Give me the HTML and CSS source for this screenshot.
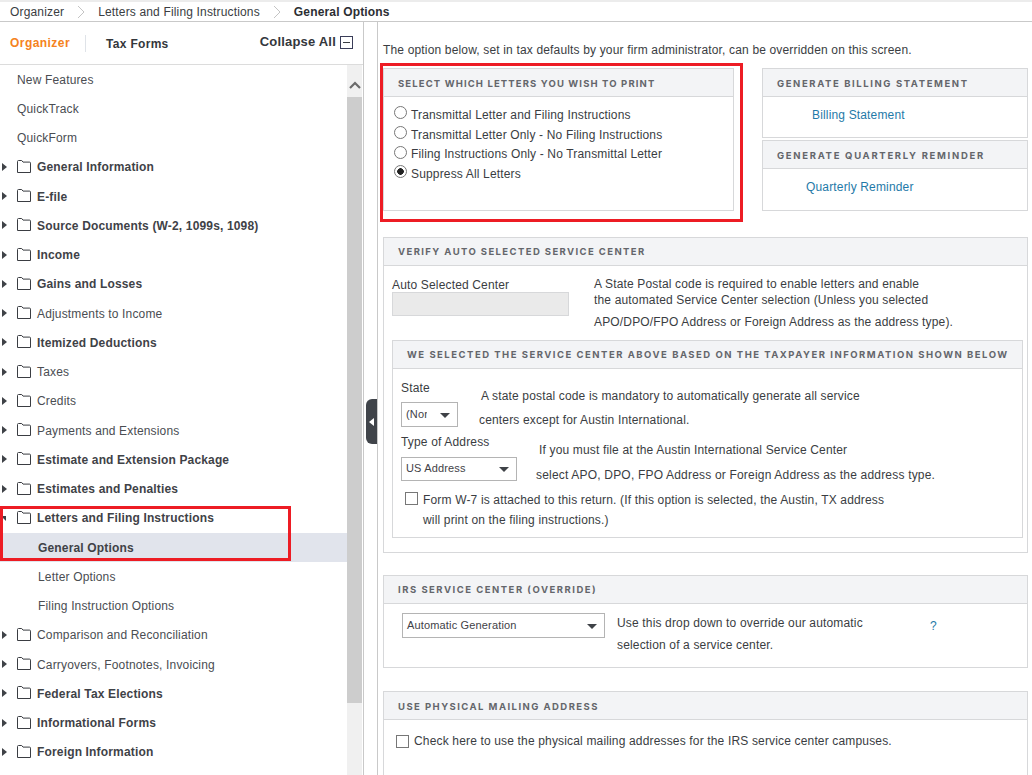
FILE: index.html
```html
<!DOCTYPE html>
<html lang="en">
<head>
<meta charset="utf-8">
<title>General Options</title>
<link rel="stylesheet" href="styles.css">
</head>
<body>
<svg class="defs" width="0" height="0" aria-hidden="true">
  <symbol id="folder" viewBox="0 0 14 13"><path d="M.5 12.5V1.5a1 1 0 0 1 1-1h3.2l1.3 1.6h6.5a1 1 0 0 1 1 1v9.4z" fill="none" stroke="#3a3d42"/></symbol>
</svg>
<nav class="crumbs">
  <span>Organizer</span>
  <svg class="crumb-sep" width="8" height="14" viewBox="0 0 8 14"><path d="M1 1l6 6-6 6" fill="none" stroke="#c4c4c4"/></svg>
  <span>Letters and Filing Instructions</span>
  <svg class="crumb-sep" width="8" height="14" viewBox="0 0 8 14"><path d="M1 1l6 6-6 6" fill="none" stroke="#c4c4c4"/></svg>
  <strong>General Options</strong>
</nav>
<div class="app">
  <aside class="sidebar">
    <div class="tabs">
      <span class="tab tab-active">Organizer</span>
      <span class="tab tab-forms">Tax Forms</span>
      <span class="collapse">Collapse All <i class="minus"></i></span>
    </div>
    <div class="tree-wrap">
      <ul class="tree">
        <li class="row plain">New Features</li>
        <li class="row plain">QuickTrack</li>
        <li class="row plain">QuickForm</li>
        <li class="row b"><i class="caret"></i><svg class="folder"><use href="#folder"/></svg>General Information</li>
        <li class="row b"><i class="caret"></i><svg class="folder"><use href="#folder"/></svg>E-file</li>
        <li class="row b"><i class="caret"></i><svg class="folder"><use href="#folder"/></svg>Source Documents (W-2, 1099s, 1098)</li>
        <li class="row b"><i class="caret"></i><svg class="folder"><use href="#folder"/></svg>Income</li>
        <li class="row b"><i class="caret"></i><svg class="folder"><use href="#folder"/></svg>Gains and Losses</li>
        <li class="row"><i class="caret"></i><svg class="folder"><use href="#folder"/></svg>Adjustments to Income</li>
        <li class="row b"><i class="caret"></i><svg class="folder"><use href="#folder"/></svg>Itemized Deductions</li>
        <li class="row"><i class="caret"></i><svg class="folder"><use href="#folder"/></svg>Taxes</li>
        <li class="row"><i class="caret"></i><svg class="folder"><use href="#folder"/></svg>Credits</li>
        <li class="row"><i class="caret"></i><svg class="folder"><use href="#folder"/></svg>Payments and Extensions</li>
        <li class="row b"><i class="caret"></i><svg class="folder"><use href="#folder"/></svg>Estimate and Extension Package</li>
        <li class="row b"><i class="caret"></i><svg class="folder"><use href="#folder"/></svg>Estimates and Penalties</li>
        <li class="row b"><i class="caret caret-open"></i><svg class="folder"><use href="#folder"/></svg>Letters and Filing Instructions</li>
        <li class="row sub selected">General Options</li>
        <li class="row sub">Letter Options</li>
        <li class="row sub">Filing Instruction Options</li>
        <li class="row"><i class="caret"></i><svg class="folder"><use href="#folder"/></svg>Comparison and Reconciliation</li>
        <li class="row"><i class="caret"></i><svg class="folder"><use href="#folder"/></svg>Carryovers, Footnotes, Invoicing</li>
        <li class="row b"><i class="caret"></i><svg class="folder"><use href="#folder"/></svg>Federal Tax Elections</li>
        <li class="row b"><i class="caret"></i><svg class="folder"><use href="#folder"/></svg>Informational Forms</li>
        <li class="row b"><i class="caret"></i><svg class="folder"><use href="#folder"/></svg>Foreign Information</li>
      </ul>
      <div class="scrollbar">
        <div class="scroll-up"><svg width="12" height="8" viewBox="0 0 12 8"><path d="M1 7l5-5 5 5" fill="none" stroke="#6b6b6b" stroke-width="2.2"/></svg></div>
        <div class="thumb"></div>
      </div>
    </div>
    <div class="highlight hl-tree"></div>
  </aside>
  <div class="gutter"><div class="handle"><i></i></div></div>
  <main class="main">
    <p class="note">The option below, set in tax defaults by your firm administrator, can be overridden on this screen.</p>
    <div class="top-grid">
      <section class="panel letters">
        <h2 class="panel-head">Select which letters you wish to print</h2>
        <div class="radios">
          <label class="radio"><input type="radio" name="l"> Transmittal Letter and Filing Instructions</label>
          <label class="radio"><input type="radio" name="l"> Transmittal Letter Only - No Filing Instructions</label>
          <label class="radio"><input type="radio" name="l"> Filing Instructions Only - No Transmittal Letter</label>
          <label class="radio"><input type="radio" name="l" checked> Suppress All Letters</label>
        </div>
        <div class="highlight hl-letters"></div>
      </section>
      <div class="side-panels">
        <section class="panel bill">
          <h2 class="panel-head">Generate billing statement</h2>
          <a class="link link-bill">Billing Statement</a>
        </section>
        <section class="panel quarter">
          <h2 class="panel-head">Generate quarterly reminder</h2>
          <a class="link link-quarter">Quarterly Reminder</a>
        </section>
      </div>
    </div>

    <section class="panel verify">
      <h2 class="panel-head">Verify auto selected service center</h2>
      <div class="auto">
        <div class="auto-field">
          <div class="auto-label">Auto Selected Center</div>
          <div class="auto-input"></div>
        </div>
        <div class="auto-text">
          <div class="l16">A State Postal code is required to enable letters and enable</div>
          <div class="l16">the automated Service Center selection (Unless you selected</div>
          <div class="l28">APO/DPO/FPO Address or Foreign Address as the address type).</div>
        </div>
      </div>
      <section class="panel nested">
        <h2 class="panel-head">We selected the service center above based on the taxpayer information shown below</h2>
        <div class="n-row n-state">
          <div class="n-field">
            <div class="n-label">State</div>
            <div class="select sel-state"><span class="sel-val">(None)</span><i class="sel-caret"></i></div>
          </div>
          <div class="n-text">
            <div class="st1">A state postal code is mandatory to automatically generate all service</div>
            <div class="st2">centers except for Austin International.</div>
          </div>
        </div>
        <div class="n-row n-type">
          <div class="n-field">
            <div class="n-label">Type of Address</div>
            <div class="select sel-type"><span class="sel-val">US Address</span><i class="sel-caret"></i></div>
          </div>
          <div class="n-text">
            <div class="ty1">If you must file at the Austin International Service Center</div>
            <div class="ty2">select APO, DPO, FPO Address or Foreign Address as the address type.</div>
          </div>
        </div>
        <label class="w7"><input type="checkbox" class="check">
          <span>Form W-7 is attached to this return. (If this option is selected, the Austin, TX address<br>will print on the filing instructions.)</span>
        </label>
      </section>
    </section>

    <section class="panel irs">
      <h2 class="panel-head">IRS service center (override)</h2>
      <div class="irs-body">
        <div class="select sel-irs"><span class="sel-val">Automatic Generation</span><i class="sel-caret"></i></div>
        <div class="irs-text">
          <div class="ir1">Use this drop down to override our automatic</div>
          <div class="ir2">selection of a service center.</div>
        </div>
        <a class="help">?</a>
      </div>
    </section>

    <section class="panel physical">
      <h2 class="panel-head">Use physical mailing address</h2>
      <label class="phys-row"><input type="checkbox" class="check"> Check here to use the physical mailing addresses for the IRS service center campuses.</label>
    </section>
  </main>
</div>
</body>
</html>
```

FILE: styles.css
```css
* { box-sizing: border-box; }
html, body { margin: 0; padding: 0; height: 775px; overflow: hidden; background: #fff; }
body { font: 12px/16px "Liberation Sans", Arial, sans-serif; color: #3a3d42; letter-spacing: .16px; }
.defs { position: absolute; }
h2, p, ul { margin: 0; padding: 0; }
ul { list-style: none; }

.crumbs { height: 22px; border-top: 2px solid #ececec; border-bottom: 1px solid #c9c9c9; display: flex; align-items: center; padding-left: 10px; color: #3a3d42; }
.crumbs strong { color: #2b2e33; }
.crumb-sep { margin: 0 13px; }

.app { display: flex; height: 753px; }
.sidebar { width: 363px; flex: none; position: relative; }
.tabs { height: 43px; border-bottom: 1px solid #dcdcdc; display: flex; align-items: center; padding-left: 10px; font-weight: bold; }
.tab-active { color: #f58220; padding-right: 15px; border-right: 1px solid #dfe3e8; line-height: 17px; letter-spacing: .45px; }
.tab-forms { color: #34373c; margin-left: 20px; letter-spacing: .3px; margin-top: 1px; }
.collapse { margin-left: auto; margin-right: 10px; font-size: 13px; color: #34373c; display: flex; align-items: center; margin-top: -2px; letter-spacing: .2px; }
.minus { width: 13px; height: 13px; border: 1px solid #3a3d58; margin-left: 4px; position: relative; }
.minus::after { content: ""; position: absolute; left: 2px; right: 2px; top: 5px; height: 1px; background: #3a3d42; }

.tree-wrap { display: flex; height: 710px; }
.tree { width: 347px; flex: none; overflow: hidden; }
.row { height: 29.25px; display: flex; align-items: center; position: relative; padding-left: 37px; color: #4a4d52; white-space: nowrap; }
.row.plain { padding-left: 17px; }
.row.sub { padding-left: 38px; }
.row.b { font-weight: bold; color: #3f4247; }
.row.selected { background: #e1e4ec; font-weight: bold; color: #3f4247; }
.caret { position: absolute; left: 2px; top: 10px; width: 0; height: 0; border-left: 5px solid #3f4247; border-top: 4px solid transparent; border-bottom: 4px solid transparent; }
.caret-open { left: 1px; top: 12px; border-left: 5px solid transparent; border-right: 0; border-top: 5px solid #3f4247; border-bottom: 0; }
.folder { position: absolute; left: 17px; top: 7px; width: 14px; height: 13px; }

.scrollbar { width: 15px; background: #f0f0f0; flex: none; }
.scroll-up { height: 32px; display: flex; align-items: center; justify-content: center; padding-top: 8px; }
.thumb { height: 606px; background: #cdcdcd; }
.highlight { position: absolute; border: 3px solid #ed1c24; pointer-events: none; }
.hl-tree { left: 0; top: 484px; width: 291px; height: 55px; }

.gutter { width: 15px; flex: none; border-left: 1px solid #c9c9c9; border-right: 1px solid #c9c9c9; position: relative; }
.handle { position: absolute; right: 0; top: 377px; width: 11px; height: 45px; background: #40444a; border-radius: 6px 0 0 6px; display: flex; align-items: center; justify-content: center; }
.handle i { width: 0; height: 0; border-right: 5px solid #fff; border-top: 4px solid transparent; border-bottom: 4px solid transparent; }

.main { flex: 1; padding-left: 5px; min-width: 0; overflow: hidden; }
.note { margin-top: 20px; height: 26px; color: #3a3d42; }
.panel { border: 1px solid #d7d8da; background: #fff; position: relative; }
.panel-head { height: 28px; background: #f3f4f6; border-bottom: 1px solid #d7d8da; font: 700 9.5px/27px Inter, "Liberation Sans", sans-serif; letter-spacing: 1.4px; text-transform: uppercase; color: #64666b; padding-left: 14px; white-space: nowrap; overflow: hidden; }
.letters .panel-head { line-height: 29px; letter-spacing: 1.13px; }
.bill .panel-head { line-height: 29px; letter-spacing: 1.6px; }
.quarter .panel-head { line-height: 29px; letter-spacing: 1.7px; }
.nested .panel-head { letter-spacing: 1.5px; }
.irs .panel-head { letter-spacing: 1.5px; }
.physical .panel-head { letter-spacing: 1.45px; line-height: 29px; }

.top-grid { display: flex; }
.letters { width: 351px; height: 143px; flex: none; }
.radios { padding: 8px 0 0 10px; }
.radio { display: flex; align-items: center; height: 19.7px; color: #3a3d42; }
.radio input { appearance: none; -webkit-appearance: none; width: 13px; height: 13px; border: 1px solid #777; border-radius: 50%; margin: 0 4px 4px 0; background: #fff; flex: none; }
.radio input:checked { background: radial-gradient(circle, #222 0 3px, #fff 3.6px); }
.hl-letters { left: -4px; top: -6px; width: 363px; height: 159px; }
.side-panels { width: 266px; margin-left: 28px; flex: none; display: flex; flex-direction: column; gap: 2px; }
.bill { height: 70px; }
.quarter { height: 71px; }
.link { display: block; color: #1f7aa8; padding-top: 10px; }
.link-bill { padding-left: 49px; }
.link-quarter { padding-left: 43px; }

.verify { margin-top: 26px; height: 316px; width: 645px; }
.auto { display: flex; height: 74px; padding: 11px 0 0 8px; }
.auto-field { width: 202px; flex: none; }
.auto-label { height: 16px; }
.auto-input { width: 177px; height: 24px; margin-top: -1px; background: #eaeaea; border: 1px solid #d7d8da; }
.auto-text { margin-top: -1px; }
.l16 { height: 16px; }
.l28 { height: 22px; padding-top: 6px; line-height: 16px; }
.nested { margin: 0 4px 0 8px; height: 198px; }
.n-row { display: flex; padding-left: 8px; }
.n-state { height: 65px; padding-top: 11px; }
.n-type { height: 54px; }
.n-field { flex: none; }
.n-state .n-field { width: 79px; }
.n-type .n-field { width: 135px; }
.n-label { height: 16px; }
.select { position: relative; background: #fff; border: 1px solid #b4b4b4; display: flex; align-items: center; font-size: 11px; color: #3f4247; overflow: hidden; }
.sel-val { padding-left: 4px; white-space: nowrap; overflow: hidden; margin-top: -2px; }
.sel-caret { position: absolute; right: 7px; top: 50%; margin-top: -2px; width: 0; height: 0; border-top: 5px solid #3f4247; border-left: 5px solid transparent; border-right: 5px solid transparent; }
.sel-state { width: 57px; height: 25px; margin-top: 6px; }
.sel-state .sel-val { width: 25px; }
.sel-type { width: 116px; height: 24px; margin-top: 7px; }
.st1 { margin-top: 8px; padding-left: 1px; }
.st2 { margin-top: 8px; margin-left: -1px; }
.ty1 { margin-top: 8px; padding-left: 3px; }
.ty2 { margin-top: 9px; letter-spacing: .19px; }
.w7 { display: flex; padding-left: 12px; margin-top: 2px; }
.w7 span { line-height: 20px; margin-left: 5px; }
.check { appearance: none; -webkit-appearance: none; width: 13px; height: 13px; border: 1px solid #777; background: #fff; margin: 2px 0 0; flex: none; }

.irs { margin-top: 22px; height: 93px; width: 645px; }
.irs-body { display: flex; padding: 9px 0 0 18px; }
.sel-irs { width: 203px; height: 25px; }
.irs-text { width: 313px; margin-left: 12px; }
.ir1 { margin-top: 2px; }
.ir2 { margin-top: 6px; }
.help { color: #1f7aa8; margin-top: 5px; }

.physical { margin-top: 23px; width: 645px; height: 100px; }
.phys-row { display: flex; align-items: center; padding: 13px 0 0 12px; }
.phys-row .check { margin: 0 5px 0 0; }
```
